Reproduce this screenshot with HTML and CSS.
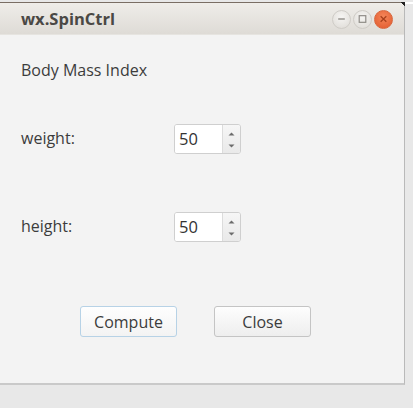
FILE: index.html
```html
<!DOCTYPE html>
<html>
<head>
<meta charset="utf-8">
<link rel="stylesheet" href="styles.css">
</head>
<body>
<div class="desk">
  <div class="topline"></div>
  <div class="window">
    <div class="titlebar">
      <span class="title">wx.SpinCtrl</span>
      <div class="controls">
        <span class="wbtn min"><svg width="18" height="18" viewBox="0 0 18 18"><line x1="5.5" y1="9" x2="12.5" y2="9" stroke="#8a8782" stroke-width="1.4"/></svg></span>
        <span class="wbtn max"><svg width="18" height="18" viewBox="0 0 18 18"><rect x="5.5" y="5.5" width="7" height="7" fill="none" stroke="#8a8782" stroke-width="1.2"/></svg></span>
        <span class="wbtn close"><svg width="18" height="18" viewBox="0 0 18 18"><path d="M6 6 L12 12 M12 6 L6 12" stroke="#a8401c" stroke-width="1.4"/></svg></span>
      </div>
    </div>
    <div class="content">
      <div class="heading">Body Mass Index</div>
      <div class="row row1">
        <span class="label">weight:</span>
        <div class="spin">
          <div class="field">50</div>
          <div class="arrows">
            <svg width="17" height="30" viewBox="0 0 17 30"><path d="M5.5 10.5 L8.5 7.5 L11.5 10.5 Z" fill="#6c6c6c"/><path d="M5.5 19.5 L8.5 22.5 L11.5 19.5 Z" fill="#6c6c6c"/></svg>
          </div>
        </div>
      </div>
      <div class="row row2">
        <span class="label">height:</span>
        <div class="spin">
          <div class="field">50</div>
          <div class="arrows">
            <svg width="17" height="30" viewBox="0 0 17 30"><path d="M5.5 10.5 L8.5 7.5 L11.5 10.5 Z" fill="#6c6c6c"/><path d="M5.5 19.5 L8.5 22.5 L11.5 19.5 Z" fill="#6c6c6c"/></svg>
          </div>
        </div>
      </div>
      <div class="buttons">
        <button class="btn focus">Compute</button>
        <button class="btn">Close</button>
      </div>
    </div>
  </div>
</div>
</body>
</html>
```

FILE: styles.css
```css
html, body {
  margin: 0;
  padding: 0;
}
body {
  width: 413px;
  height: 408px;
  background: #e8e8e8;
  font-family: "Open Sans", "DejaVu Sans", sans-serif;
  overflow: hidden;
}
.desk {
  position: relative;
  width: 413px;
  height: 408px;
  background: linear-gradient(#ffffff 0, #ffffff 2px, #e8e8e8 2px);
}
.topline {
  position: absolute;
  left: 300px;
  top: 0;
  width: 2px;
  height: 3px;
  background: #111;
}
.window {
  position: relative;
  margin-top: 2px;
  width: 404px;
  height: 380px;
  border-top: 1px solid #7a6e64;
  border-right: 1px solid #b9b9b9;
  border-bottom: 2px solid #c9c9c9;
  background: #f3f3f3;
  display: flex;
  flex-direction: column;
}
.window::after {
  content: "";
  position: absolute;
  right: -1px;
  top: -1px;
  width: 4px;
  height: 4px;
  background: linear-gradient(225deg, #222 50%, transparent 50%);
}
.titlebar {
  height: 31px;
  background: linear-gradient(#efede9, #dedbd6);
  border-bottom: 1px solid #e6e4e0;
  display: flex;
  align-items: center;
  padding-left: 21px;
  padding-right: 11px;
}
.title {
  font-family: "Open Sans", sans-serif;
  font-weight: 700;
  font-size: 16.5px;
  color: #4a4845;
  flex: 1;
  margin-top: -1px;
}
.controls {
  display: flex;
  gap: 2px;
  margin-top: 1px;
}
.wbtn {
  width: 19px;
  height: 19px;
  border-radius: 50%;
  display: flex;
  align-items: center;
  justify-content: center;
  background: radial-gradient(circle at 50% 35%, #f6f5f3, #dddad5);
  border: 1px solid #cfccc7;
  box-sizing: border-box;
}
.wbtn.close {
  background: radial-gradient(circle at 50% 35%, #f5875a, #e0582c);
  border-color: #d9663c;
}
.content {
  flex: 1;
  padding-left: 21px;
  color: #3c3c3c;
  font-size: 16px;
}
.heading {
  margin-top: 25px;
  height: 20px;
  line-height: 20px;
}
.row {
  display: flex;
  align-items: center;
  height: 30px;
}
.row1 {
  margin-top: 44px;
}
.row2 {
  margin-top: 58px;
}
.label {
  width: 153px;
  margin-top: -3px;
}
.spin {
  display: flex;
  height: 30px;
  border: 1px solid #cfcfcf;
  border-radius: 3px;
  box-sizing: border-box;
  background: #fff;
  overflow: hidden;
}
.field {
  width: 48px;
  padding-left: 4px;
  box-sizing: border-box;
  line-height: 28px;
  font-size: 16.5px;
  color: #333;
  background: #fff;
  border-right: 1px solid #dcdcdc;
}
.arrows {
  width: 17px;
  background: linear-gradient(#f6f6f6, #e9e9e9);
  display: flex;
}
.buttons {
  display: flex;
  gap: 37px;
  margin-top: 64px;
  padding-left: 59px;
}
.btn {
  width: 97px;
  height: 31px;
  font-family: "Open Sans", sans-serif;
  font-size: 16px;
  color: #3c3c3c;
  background: linear-gradient(#fdfdfd, #eeeeee);
  border: 1px solid #c4c4c4;
  border-radius: 3px;
  padding: 0;
}
.btn.focus {
  border-color: #b7d2e6;
  background: linear-gradient(#fefefe, #f3f3f3);
}
```
